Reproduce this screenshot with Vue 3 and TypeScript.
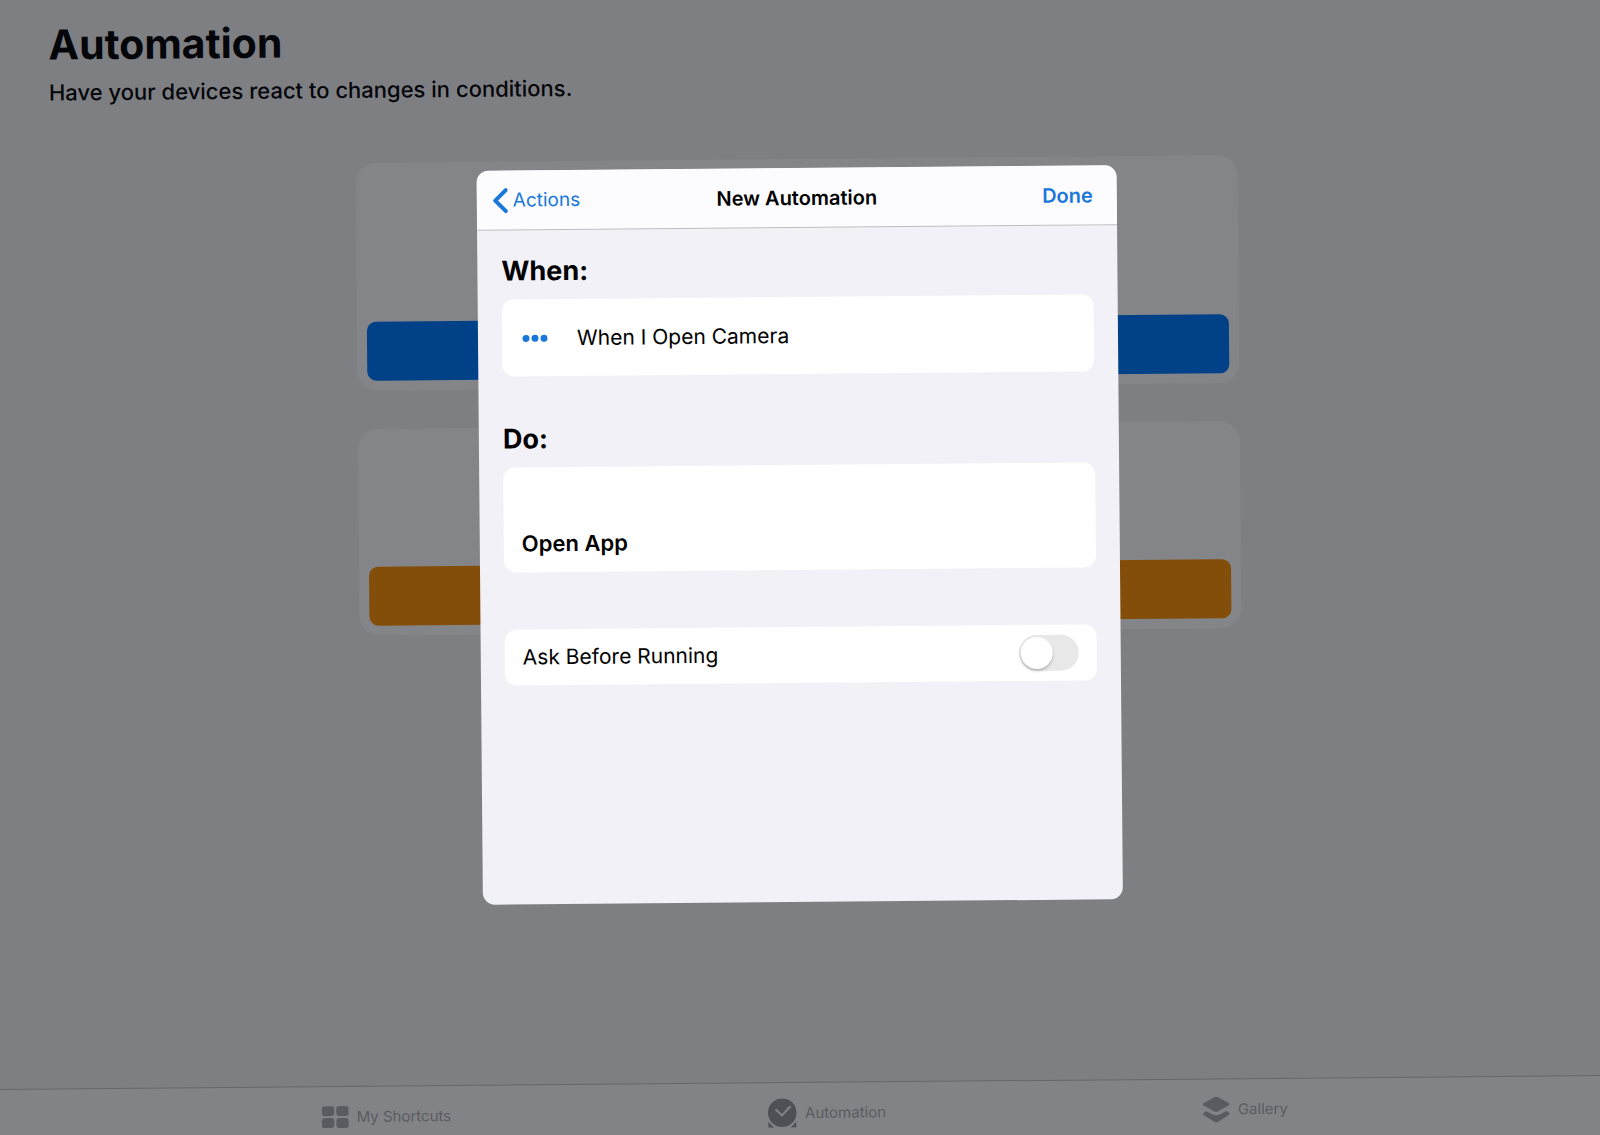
<script setup lang="ts">
import { ref } from 'vue'

interface Tile {
  id: string
  tone: 'blue' | 'orange'
  label: string
}

const tiles: Tile[] = [
  { id: 'personal', tone: 'blue', label: 'Create Personal Automation' },
  { id: 'home', tone: 'orange', label: 'Create Home Automation' },
]

const askBeforeRunning = ref(false)
</script>

<template>
  <div class="viewport">
    <div class="screen">
      <header class="page-head">
        <h1>Automation</h1>
        <p>Have your devices react to changes in conditions.</p>
      </header>

      <main class="tiles">
        <section v-for="tile in tiles" :key="tile.id" class="tile" :class="tile.tone">
          <button type="button" class="tile-button" :aria-label="tile.label"></button>
        </section>
      </main>

      <nav class="tabs">
        <a href="#shortcuts" class="tab">
          <svg width="27" height="22" viewBox="0 0 27 22" aria-hidden="true">
            <rect x="0" y="0" width="12.5" height="10" rx="3" />
            <rect x="14.5" y="0" width="12.5" height="10" rx="3" />
            <rect x="0" y="12" width="12.5" height="10" rx="3" />
            <rect x="14.5" y="12" width="12.5" height="10" rx="3" />
          </svg>
          <span>My Shortcuts</span>
        </a>
        <a href="#automation" class="tab current">
          <svg width="29" height="30" viewBox="0 0 29 30" aria-hidden="true">
            <circle cx="14.5" cy="14.5" r="14.3" />
            <path d="M.5 23.5 6 29.3H.5ZM28.5 23.5 23 29.3h5.5Z" />
            <path class="hands" d="M8.3 11.6 14.3 17.2 22.3 8.6" />
          </svg>
          <span>Automation</span>
        </a>
        <a href="#gallery" class="tab">
          <svg width="27" height="27" viewBox="0 0 27 27" aria-hidden="true">
            <path d="M11.5.8q2-1 4 0l10.600 6q1.600 1.100 0 2.200L15.500 15q-2 1-4 0L.9 9q-1.600-1.100 0-2.200Z" />
            <path d="M3.300 14.700 10.700 18.300q2.800 1.300 5.600 0l7.400-3.600 2.200 1.500q1.700 1.400 0 2.600l-10.400 6.600q-2 1.100-4 0L1.100 18.800q-1.700-1.200 0-2.600Z" />
          </svg>
          <span>Gallery</span>
        </a>
      </nav>

      <div class="overlay">
        <div class="dialog" role="dialog" aria-labelledby="dialog-title">
          <div class="dialog-bar">
            <button type="button" class="back">
              <svg width="15" height="26" viewBox="0 0 15 26" aria-hidden="true">
                <path d="M13 2.500 2.500 13 13 23.500" />
              </svg>
              <span>Actions</span>
            </button>
            <h2 id="dialog-title">New Automation</h2>
            <button type="button" class="done">Done</button>
          </div>

          <div class="dialog-body">
            <h3>When:</h3>
            <div class="card trigger">
              <svg width="26" height="8" viewBox="0 0 26 8" aria-hidden="true">
                <circle cx="4" cy="4" r="3.500" />
                <circle cx="13" cy="4" r="3.500" />
                <circle cx="22" cy="4" r="3.500" />
              </svg>
              <span>When I Open Camera</span>
            </div>

            <h3>Do:</h3>
            <div class="card action">Open App</div>

            <div class="card option">
              <label for="ask">Ask Before Running</label>
              <input id="ask" v-model="askBeforeRunning" type="checkbox" role="switch" class="switch" />
            </div>
          </div>
        </div>
      </div>
    </div>
  </div>
</template>

<style>
body {
  margin: 0;
  background: #7e7f83;
}
</style>

<style scoped>
.viewport {
  min-height: 100vh;
  overflow: hidden;
  background: #7e7f83;
  font-family: Inter, "Liberation Sans", sans-serif;
  color: #000;
}

/* The device is pictured leaning slightly to the left. */
.screen {
  position: relative;
  display: flex;
  flex-direction: column;
  min-height: 100vh;
  transform: rotate(-0.5deg);
}

h1,
h2,
h3,
p {
  margin: 0;
}

button {
  border: 0;
  padding: 0;
  background: none;
  font: inherit;
}

.page-head {
  padding: 12px 53px 0;
  color: #05060a;
}

.page-head h1 {
  font-size: 41px;
  line-height: 52px;
  font-weight: 700;
}

.page-head p {
  margin-top: 8px;
  font-size: 22px;
  line-height: 28px;
  font-weight: 500;
}

.tiles {
  display: flex;
  flex-direction: column;
  align-items: center;
  gap: 38px;
  padding: 59px 24px 0;
}

.tile {
  display: flex;
  align-items: flex-end;
  box-sizing: border-box;
  width: 100%;
  max-width: 882px;
  padding: 10px;
  border-radius: 20px;
  background: #848588;
}

.tile.blue {
  height: 228px;
}

.tile.orange {
  height: 207px;
}

.tile-button {
  width: 100%;
  height: 59px;
  border-radius: 9px;
}

.blue .tile-button {
  background: #004188;
}

.orange .tile-button {
  background: #824e09;
}

.tabs {
  display: flex;
  justify-content: space-evenly;
  align-items: flex-start;
  box-sizing: border-box;
  height: 73px;
  margin: auto -20px -20px;
  padding: 15px 20px 0;
  border-top: 1px solid #66676a;
  background: #828387;
}

.tab {
  display: flex;
  align-items: center;
  gap: 8px;
  height: 30px;
  color: #5a5b60;
  fill: #5a5b60;
  font-size: 15px;
  line-height: 20px;
  text-decoration: none;
}

.tab.current {
  fill: #4f5055;
}

.hands {
  fill: none;
  stroke: #828387;
  stroke-width: 2;
  stroke-linecap: round;
  stroke-linejoin: round;
}

.overlay {
  position: absolute;
  inset: 0;
  display: flex;
  justify-content: center;
  align-items: flex-start;
  padding-top: 168px;
}

.dialog {
  box-sizing: border-box;
  width: 100%;
  max-width: 640px;
  min-height: 734px;
  border-radius: 12px;
  overflow: hidden;
  background: #f2f1f7;
}

.dialog-bar {
  display: grid;
  grid-template-columns: 1fr auto 1fr;
  align-items: center;
  box-sizing: border-box;
  height: 60px;
  padding: 0 24px 0 16px;
  border-bottom: 1px solid #bdbdc1;
  background: #fcfcfe;
  font-size: 20px;
  line-height: 24px;
}

.dialog-bar h2 {
  padding-left: 8px;
  font-size: 20px;
  font-weight: 600;
}

.back,
.done {
  color: #1877d8;
}

.back {
  display: flex;
  align-items: center;
  justify-self: start;
  gap: 5px;
  font-size: 19px;
}

.back path {
  fill: none;
  stroke: #1877d8;
  stroke-width: 4;
  stroke-linecap: round;
  stroke-linejoin: round;
}

.done {
  justify-self: end;
  font-weight: 600;
}

.dialog-body {
  padding: 23px 24px 24px;
}

h3 {
  font-size: 27px;
  line-height: 36px;
  font-weight: 700;
}

.card {
  display: flex;
  box-sizing: border-box;
  padding: 0 18px;
  border-radius: 12px;
  background: #fff;
  font-size: 21px;
  line-height: 28px;
}

.trigger {
  align-items: center;
  gap: 29px;
  height: 77px;
  margin: 10px 0 45px;
  padding-left: 20px;
}

.trigger svg {
  fill: #1877d8;
}

.action {
  align-items: flex-end;
  height: 105px;
  margin: 10px 0 57px;
  padding-bottom: 15px;
  font-size: 22px;
  font-weight: 600;
}

.option {
  align-items: center;
  justify-content: space-between;
  height: 56px;
}

.switch {
  appearance: none;
  display: flex;
  align-items: center;
  box-sizing: border-box;
  width: 60px;
  height: 36px;
  margin: 0;
  padding: 2px;
  border-radius: 18px;
  background: #e8e8e9;
}

.switch::before {
  content: "";
  width: 32px;
  height: 32px;
  border-radius: 50%;
  background: #fff;
  box-shadow: 0 2px 3px rgba(0, 0, 0, 0.22);
}

.switch:checked {
  justify-content: flex-end;
  background: #34c759;
}
</style>
